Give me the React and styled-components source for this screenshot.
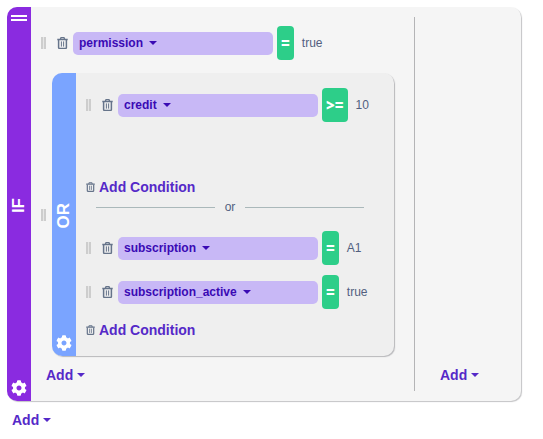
import React from "react";
import styled, { createGlobalStyle } from "styled-components";
import { FaCog } from "react-icons/fa";

const GlobalStyle = createGlobalStyle`
  *, *::before, *::after { box-sizing: border-box; }
  body {
    margin: 0;
    background: #fff;
    color: #525f7f;
    font: 12px/16px "Liberation Sans", Arial, sans-serif;
  }
  button, select {
    margin: 0;
    padding: 0;
    border: 0;
    background: none;
    color: inherit;
    font: inherit;
    cursor: pointer;
  }
`;

const Page = styled.main`
  display: flex;
  flex-direction: column;
  align-items: flex-start;
  gap: 9px;
  padding: 7px 22px 7px 7px;
`;

const Card = styled.section`
  display: flex;
  align-self: stretch;
  flex: 1;
  min-width: 0;
  overflow: hidden;
  border-radius: 10px;
  background: ${({ $nested }) => ($nested ? "#efefef" : "#f5f5f5")};
  box-shadow: 1px 1px 1px ${({ $nested }) => ($nested ? "#b8b8bb" : "#c4c4c6")};
`;

const Rail = styled.header`
  display: grid;
  grid-template-rows: 1fr auto 1fr;
  justify-items: center;
  flex: none;
  width: 24px;
  padding: 8px 0 5px;
  color: #fff;
  background: ${({ $tone }) => ($tone === "if" ? "#8a2be0" : "#7aa4ff")};
`;

const RailLabel = styled.h2`
  grid-row: 2;
  margin: 0;
  font-size: 17px;
  line-height: 20px;
  writing-mode: vertical-rl;
  transform: rotate(180deg);
`;

const RailGrip = styled.button`
  grid-row: 1;
  align-self: start;
  width: 16px;
  height: 6px;
  border: solid #fff;
  border-width: 2px 0;
  cursor: grab;
`;

const RailSettings = styled.button`
  grid-row: 3;
  align-self: end;
  display: flex;
  font-size: 16px;
`;

const Conditions = styled.div`
  display: flex;
  flex-direction: column;
  flex: 1;
  min-width: 0;
  padding: 19px 20px 16px 10px;
`;

const Outcome = styled.div`
  display: flex;
  align-items: flex-end;
  width: 107px;
  margin: 10px 0;
  padding: 0 25px 6px;
  border-left: 1px solid #b4b4b6;
`;

const GroupRow = styled.div`
  display: flex;
  align-items: center;
  gap: 5px;
  margin: 13px 0 9px;
`;

const GroupBody = styled.div`
  flex: 1;
  min-width: 0;
  padding: 15px 10px 16px;
`;

const Branch = styled.div`
  display: flex;
  flex-direction: column;
  align-items: flex-start;
  gap: 10px;
`;

const Row = styled.div`
  display: flex;
  align-items: center;
`;

const Grip = styled.button`
  flex: none;
  width: 6px;
  height: 12px;
  background: linear-gradient(90deg, #cdcdcd 2px, #e6e6e6 2px 3px, #cdcdcd 3px 5px, transparent 5px);
  cursor: grab;
`;

const TrashButton = styled.button`
  display: flex;
  flex: none;
  color: #66748a;
  margin: ${({ $small }) => ($small ? "0 4px 0 0" : "0 5px 0 10px")};

  svg {
    width: ${({ $small }) => ($small ? 9 : 11)}px;
    height: ${({ $small }) => ($small ? 10 : 12)}px;
  }
`;

const FieldPill = styled.label`
  display: flex;
  align-items: center;
  gap: 6px;
  width: 200px;
  height: 23px;
  padding: 0 6px;
  border-radius: 5px;
  background: #c8b8f6;
  color: #3a0ab4;
`;

const FieldSelect = styled.select`
  appearance: none;
  field-sizing: content;
  font-weight: bold;
`;

const Operator = styled.button`
  flex: none;
  height: 34px;
  margin: 0 8px 0 4px;
  padding: 0 4px;
  border-radius: 4px;
  background: #2dce89;
  color: #fff;
  font-family: "Open Sans", "Liberation Sans", sans-serif;
  font-size: 15px;
  font-weight: 800;
`;

const Caret = styled.svg`
  flex: none;
  width: 8px;
  height: 4px;
  fill: currentColor;
`;

const TextButton = styled.button`
  display: flex;
  align-items: center;
  gap: 4px;
  height: 20px;
  margin-left: ${({ $indent }) => ($indent ? 5 : 0)}px;
  color: #5529c8;
  font-size: 14px;
  font-weight: bold;
  white-space: nowrap;
`;

const AddConditionRow = styled(Row)`
  margin-top: ${({ $spacious }) => ($spacious ? 55 : 11)}px;
`;

const Divider = styled.div`
  display: flex;
  align-items: center;
  gap: 10px;
  height: 20px;
  margin: 0 20px 14px 10px;
  &::before, &::after {
    content: "";
    flex: 1;
    height: 1px;
    background: #aab8ba;
  }
`;

const CaretDown = () => (
  <Caret viewBox="0 0 8 4" aria-hidden="true">
    <path d="M0 0h8L4 4z" />
  </Caret>
);

const TrashIcon = () => (
  <svg viewBox="0 0 11 12" fill="none" stroke="currentColor" aria-hidden="true">
    <path d="M0.3 2.5h10.4" strokeWidth="1.4" />
    <path d="M3.3 2.4L4 0.7h3l0.7 1.7" strokeWidth="1.3" />
    <path d="M1.6 2.8v7.6q0 1 1 1h5.8q1 0 1-1V2.8" strokeWidth="1.5" />
    <path d="M4.4 4.4v5.2M6.6 4.4v5.2" strokeWidth="1" />
  </svg>
);

const fields = ["permission", "credit", "subscription", "subscription_active"];

function Condition({ field, operator, value }) {
  return (
    <Row>
      <Grip type="button" aria-label="Move condition" />
      <TrashButton type="button" aria-label="Delete condition">
        <TrashIcon />
      </TrashButton>
      <FieldPill>
        <FieldSelect defaultValue={field} aria-label="Field">
          {fields.map((name) => (
            <option key={name}>{name}</option>
          ))}
        </FieldSelect>
        <CaretDown />
      </FieldPill>
      <Operator type="button">{operator}</Operator>
      <span>{value}</span>
    </Row>
  );
}

function AddCondition({ spacious }) {
  return (
    <AddConditionRow $spacious={spacious}>
      <TrashButton type="button" $small aria-label="Delete branch">
        <TrashIcon />
      </TrashButton>
      <TextButton type="button">Add Condition</TextButton>
    </AddConditionRow>
  );
}

function AddMenu({ indent }) {
  return (
    <TextButton type="button" aria-haspopup="menu" $indent={indent}>
      Add
      <CaretDown />
    </TextButton>
  );
}

function RuleRail({ tone, label, movable }) {
  return (
    <Rail $tone={tone}>
      {movable && <RailGrip type="button" aria-label="Move rule" />}
      <RailLabel>{label}</RailLabel>
      <RailSettings type="button" aria-label={`${label} settings`}>
        <FaCog />
      </RailSettings>
    </Rail>
  );
}

export default function App() {
  return (
    <>
      <GlobalStyle />
      <Page>
        <Card>
          <RuleRail tone="if" label="IF" movable />
          <Conditions>
            <Condition field="permission" operator="=" value="true" />
            <GroupRow>
              <Grip type="button" aria-label="Move group" />
              <Card $nested>
                <RuleRail tone="or" label="OR" />
                <GroupBody>
                  <Branch>
                    <Condition field="credit" operator=">=" value="10" />
                  </Branch>
                  <AddCondition spacious />
                  <Divider>or</Divider>
                  <Branch>
                    <Condition field="subscription" operator="=" value="A1" />
                    <Condition field="subscription_active" operator="=" value="true" />
                  </Branch>
                  <AddCondition />
                </GroupBody>
              </Card>
            </GroupRow>
            <AddMenu indent />
          </Conditions>
          <Outcome>
            <AddMenu />
          </Outcome>
        </Card>
        <AddMenu indent />
      </Page>
    </>
  );
}
